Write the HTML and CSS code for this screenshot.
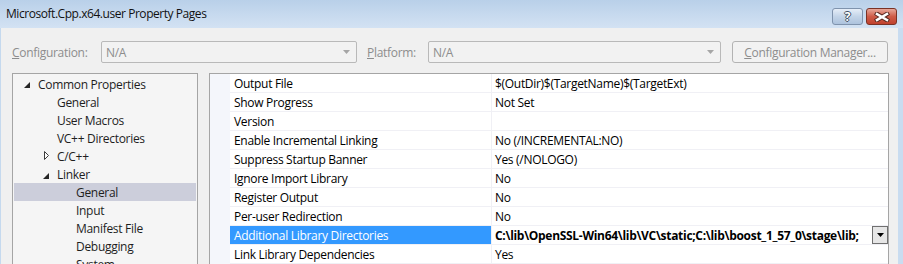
FILE: index.html
```html
<!DOCTYPE html>
<html lang="en">

<head>
    <meta charset="UTF-8">
    <title>Microsoft.Cpp.x64.user Property Pages</title>
    <link rel="stylesheet" href="styles.css">
</head>

<body>

    <div class="window">
        <!-- Title bar -->
        <div class="titlebar">
            <span class="title">Microsoft.Cpp.x64.user Property Pages</span>
            <div class="caption-buttons">
                <span class="cbtn help">?</span>
                <span class="cbtn close">
                    <svg width="16" height="10" viewBox="0 0 16 10">
                        <path d="M3 2 L13 8 M13 2 L3 8" stroke="#5a2a22" stroke-width="4.5" stroke-linecap="square" />
                        <path d="M3 2 L13 8 M13 2 L3 8" stroke="#fff" stroke-width="2.5" stroke-linecap="square" />
                    </svg>
                </span>
            </div>
        </div>

        <div class="frame">
            <div class="client">
                <!-- Configuration row -->
                <div class="toolbar">
                    <label class="field-label config-label"><u>C</u>onfiguration:</label>
                    <div class="combo config-combo">
                        <span>N/A</span>
                        <svg class="combo-arrow" width="7" height="4" viewBox="0 0 7 4"><path d="M0 0 H7 L3.5 4 Z" fill="#a6a6a6" /></svg>
                    </div>
                    <label class="field-label platform-label"><u>P</u>latform:</label>
                    <div class="combo platform-combo">
                        <span>N/A</span>
                        <svg class="combo-arrow" width="7" height="4" viewBox="0 0 7 4"><path d="M0 0 H7 L3.5 4 Z" fill="#a6a6a6" /></svg>
                    </div>
                    <button class="manager-btn" type="button"><u>C</u>onfiguration Manager...</button>
                </div>

                <div class="main">
                    <!-- Category tree -->
                    <div class="tree">
                        <div class="tree-row level-0">
                            <svg class="twisty" width="6" height="6" viewBox="0 0 6 6"><path d="M6 0 V6 H0 Z" fill="#262626" /></svg>
                            <span>Common Properties</span>
                        </div>
                        <div class="tree-row level-1"><span>General</span></div>
                        <div class="tree-row level-1"><span>User Macros</span></div>
                        <div class="tree-row level-1"><span>VC++ Directories</span></div>
                        <div class="tree-row level-1">
                            <svg class="twisty collapsed" width="5" height="9" viewBox="0 0 5 9"><path d="M0.5 0.5 L4.5 4.5 L0.5 8.5 Z" fill="#fff" stroke="#3c3c3c" /></svg>
                            <span>C/C++</span>
                        </div>
                        <div class="tree-row level-1">
                            <svg class="twisty" width="6" height="6" viewBox="0 0 6 6"><path d="M6 0 V6 H0 Z" fill="#262626" /></svg>
                            <span>Linker</span>
                        </div>
                        <div class="tree-row level-2 selected"><span>General</span></div>
                        <div class="tree-row level-2"><span>Input</span></div>
                        <div class="tree-row level-2"><span>Manifest File</span></div>
                        <div class="tree-row level-2"><span>Debugging</span></div>
                        <div class="tree-row level-2"><span>System</span></div>
                    </div>

                    <!-- Property grid -->
                    <div class="grid">
                        <div class="prop-row">
                            <div class="prop-name">Output File</div>
                            <div class="prop-value">$(OutDir)$(TargetName)$(TargetExt)</div>
                        </div>
                        <div class="prop-row">
                            <div class="prop-name">Show Progress</div>
                            <div class="prop-value">Not Set</div>
                        </div>
                        <div class="prop-row">
                            <div class="prop-name">Version</div>
                            <div class="prop-value"></div>
                        </div>
                        <div class="prop-row">
                            <div class="prop-name">Enable Incremental Linking</div>
                            <div class="prop-value">No (/INCREMENTAL:NO)</div>
                        </div>
                        <div class="prop-row">
                            <div class="prop-name">Suppress Startup Banner</div>
                            <div class="prop-value">Yes (/NOLOGO)</div>
                        </div>
                        <div class="prop-row">
                            <div class="prop-name">Ignore Import Library</div>
                            <div class="prop-value">No</div>
                        </div>
                        <div class="prop-row">
                            <div class="prop-name">Register Output</div>
                            <div class="prop-value">No</div>
                        </div>
                        <div class="prop-row">
                            <div class="prop-name">Per-user Redirection</div>
                            <div class="prop-value">No</div>
                        </div>
                        <div class="prop-row selected">
                            <div class="prop-name">Additional Library Directories</div>
                            <div class="prop-value">
                                <span class="edit-text">C:\lib\OpenSSL-Win64\lib\VC\static;C:\lib\boost_1_57_0\stage\lib;</span>
                                <span class="drop-btn">
                                    <svg width="7" height="4" viewBox="0 0 7 4"><path d="M0 0 H7 L3.5 4 Z" fill="#000" /></svg>
                                </span>
                            </div>
                        </div>
                        <div class="prop-row">
                            <div class="prop-name">Link Library Dependencies</div>
                            <div class="prop-value">Yes</div>
                        </div>
                    </div>
                </div>
            </div>
        </div>
    </div>

</body>

</html>
```

FILE: styles.css
```css
body {
    margin: 0;
    padding: 0;
    font-family: 'Open Sans', 'Noto Sans', sans-serif;
    font-size: 12px;
    letter-spacing: -0.3px;
    color: #000;
    background-color: #f0f0f0;
}

.window {
    width: 903px;
    height: 264px;
    overflow: hidden;
}

/* Title bar */
.titlebar {
    height: 28px;
    display: flex;
    align-items: center;
    justify-content: space-between;
    background: linear-gradient(to bottom, #b9d0e9, #d3e2f3);
}

.title {
    padding-left: 6px;
    margin-top: -2px;
    color: #111;
    letter-spacing: -0.45px;
}

.caption-buttons {
    display: flex;
    gap: 3px;
    padding-right: 6px;
    align-self: flex-start;
    margin-top: 8px;
}

.cbtn {
    height: 15px;
    border-radius: 3px;
    display: flex;
    align-items: center;
    justify-content: center;
}

.cbtn.help {
    width: 29px;
    border: 1px solid #7f93ad;
    background: linear-gradient(to bottom, #e6eef8, #c3d4e8 50%, #adc3dd);
    color: #fff;
    font-weight: bold;
    font-size: 12px;
    line-height: 15px;
    text-shadow: 1px 0 #414f63, -1px 0 #414f63, 0 1px #414f63, 0 -1px #414f63;
}

.cbtn.close {
    width: 29px;
    border: 1px solid #7a3225;
    background: linear-gradient(to bottom, #e7a89a, #cf5c48 50%, #c0412d);
}

/* Window frame */
.frame {
    height: 236px;
    border-left: 1px solid #c5d9ee;
    border-right: 5px solid #c9dcf0;
}

.client {
    padding: 13px 9px 0 11px;
}

.toolbar {
    display: flex;
    align-items: center;
    height: 22px;
}

.field-label {
    color: #8d8d8d;
}

.config-label {
    width: 89px;
}

.platform-label {
    width: 61px;
    margin-left: 10px;
}

.combo {
    box-sizing: border-box;
    height: 22px;
    border: 1px solid #b9b9b9;
    border-radius: 2px;
    background-color: #f2f2f2;
    color: #8d8d8d;
    display: flex;
    align-items: center;
    justify-content: space-between;
    padding: 0 6px 0 4px;
}

.config-combo {
    width: 256px;
}

.platform-combo {
    width: 293px;
}

.manager-btn {
    margin-left: 11px;
    width: 156px;
    height: 22px;
    border: 1px solid #b3b3b3;
    border-radius: 3px;
    background-color: #f2f2f2;
    color: #8d8d8d;
    font-family: inherit;
    font-size: 12px;
    letter-spacing: -0.3px;
    padding: 0;
}

.main {
    display: flex;
    gap: 11px;
    margin-top: 10px;
}

/* Category tree */
.tree {
    width: 186px;
    height: 200px;
    box-sizing: border-box;
    border: 1px solid #a5a5a5;
    background-color: #f5f5f5;
    padding: 1px;
    color: #1e1e1e;
}

.tree-row {
    height: 18px;
    display: flex;
    align-items: center;
    position: relative;
}

.tree-row.level-0 {
    padding-left: 24px;
}

.tree-row.level-1 {
    padding-left: 43px;
}

.tree-row.level-2 {
    padding-left: 62px;
}

.tree-row.selected {
    background-color: #cccedb;
}

.twisty {
    position: absolute;
    left: 10px;
    top: 7px;
}

.level-1 .twisty {
    left: 29px;
    top: 8px;
}

.level-1 .twisty.collapsed {
    left: 30px;
    top: 4px;
}

/* Property grid */
.grid {
    width: 680px;
    height: 200px;
    box-sizing: border-box;
    border: 1px solid #a5a5a5;
    background-color: #f4f6fb;
}

.prop-row {
    margin-left: 20px;
    height: 18px;
    display: flex;
    background-color: #fff;
    border-bottom: 1px solid #f0f0f5;
}

.prop-name {
    width: 257px;
    padding-left: 4px;
    padding-top: 1px;
    border-right: 1px solid #f0f0f5;
    line-height: 18px;
    white-space: nowrap;
}

.prop-value {
    flex: 1;
    padding-left: 3px;
    padding-top: 1px;
    line-height: 18px;
    display: flex;
    align-items: center;
    justify-content: space-between;
    white-space: nowrap;
}

.prop-row.selected .prop-name {
    background-color: #3399ff;
    color: #fff;
}

.edit-text {
    font-weight: bold;
    letter-spacing: -0.3px;
}

.drop-btn {
    width: 14px;
    height: 16px;
    margin-top: -1px;
    border: 1px solid #707070;
    background-color: #e6e6e6;
    display: flex;
    align-items: center;
    justify-content: center;
}
```
